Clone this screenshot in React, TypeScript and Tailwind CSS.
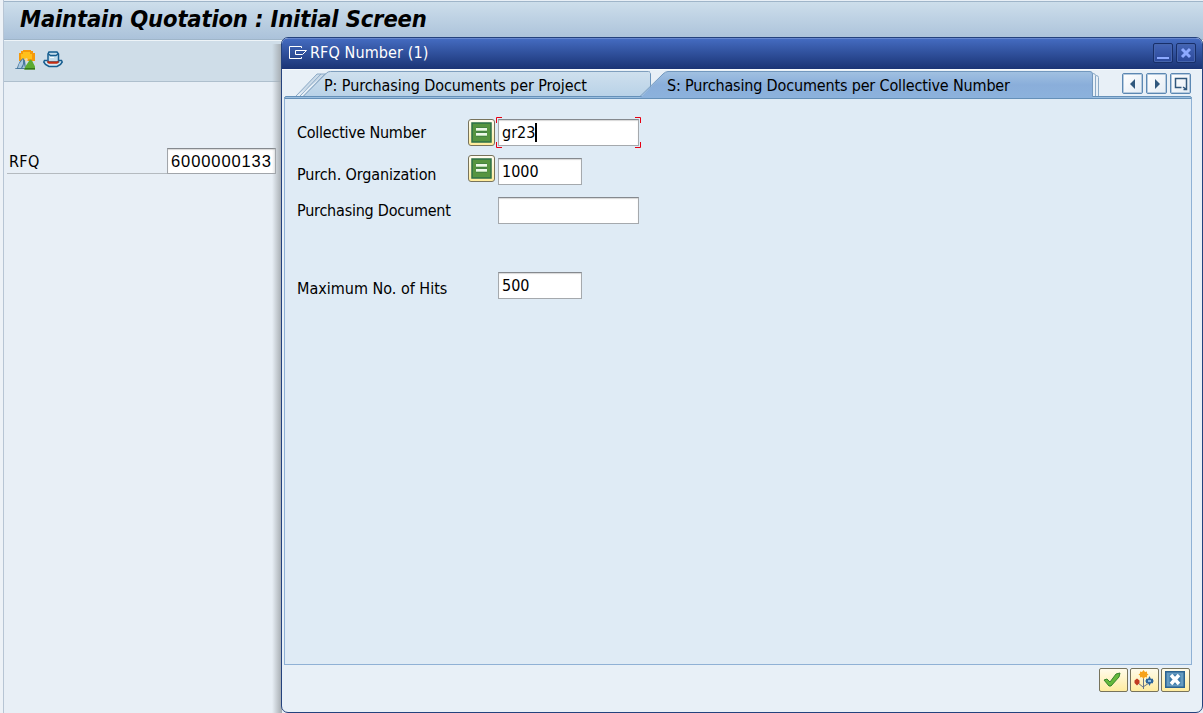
import React from "react";

const face = "font-['DejaVu_Sans_Condensed','DejaVu_Sans',sans-serif] [font-stretch:condensed]";

function MountainIcon() {
  return (
    <svg width="21" height="21" viewBox="0 0 21 21">
      <path d="M4 12V4h2V2h2V1h8v1h2v2h2v8z" fill="#f59a0c" />
      <path d="M6 10V5h2V3h7v2h2v5H6z" fill="#ffc01c" />
      <path d="M0 20.500v-1L2 19l1-3 2-4 3-3 2 2 1 9H0z" fill="#48799e" />
      <path d="M3 19l1-4 4-5v5l-2 4H3zM8 18l1-3 1 4H7z" fill="#abc8df" />
      <path d="M9 20.500l2-4 4-6 2 1 3 6v3H9z" fill="#5cab32" />
      <path d="M10 19h10v1.500H9.500z" fill="#347719" />
      <path d="M9 10l3-1 1 2-2 2z" fill="#eed9a4" />
    </svg>
  );
}

function HatIcon() {
  return (
    <svg width="20" height="17" viewBox="0 0 20 17">
      <path d="M4.500 9.500H1.500L.8 11l1.700 2.500L6 15.500h8l3.500-2 1.700-2.500-.7-1.500h-3" fill="#d5e8f4" stroke="#145c8e" strokeWidth="1.500" />
      <path d="M5 11V3l1-2h8l1.500 2v8z" fill="#c3dceb" stroke="#145c8e" strokeWidth="1.500" />
      <path d="M5.500 3l2 1.500h5.500l2-1.500" fill="none" stroke="#145c8e" strokeWidth="1.500" />
      <path d="M4.500 9.500l1.500 1h8l1.500-1V12L14 12.800H6L4.500 12z" fill="#c62d12" />
      <path d="M7 6.500h4" stroke="#f1f8fc" />
    </svg>
  );
}

function EqualButton() {
  return (
    <button className="flex h-[27px] w-[27px] items-center justify-center rounded-[3px] border border-[#77735c] bg-linear-to-b from-[#fffdf0] to-[#ffeb99]">
      <svg className="mb-px mr-px" width="21" height="21" viewBox="0 0 21 21">
        <rect x="1" y="1" width="19" height="19" fill="#579540" stroke="#2d7047" strokeWidth="1.500" />
        <path d="M5 5h11v10H5z" fill="#468441" />
        <path d="M5 7.500h11M5 12.500h11" stroke="#edf8e9" strokeWidth="3" />
        <path d="M5 8.500h11M5 13.500h11" stroke="#b9d9ac" />
      </svg>
    </button>
  );
}

function NavButton({ children }: { children: React.ReactNode }) {
  return (
    <button className="flex h-[21px] w-[21px] items-center justify-center rounded-[2px] border border-[#5c88b3] bg-linear-to-br from-white to-[#e4ecf5] shadow-[inset_0_0_0_1px_#b5cade]">
      <svg width="18" height="18" viewBox="0 0 18 18">{children}</svg>
    </button>
  );
}

function Field({ value, size, focused = false }: { value: string; size: string; focused?: boolean }) {
  return (
    <div className={`relative flex h-[27px] items-center border border-[#a5a9ad] border-t-[#85898e] bg-white pl-[3px] text-[16px] shadow-[inset_0_1px_1px_#d8d8d8] ${size}`}>
      <span>{value}</span>
      {focused && <span className="h-[19px] w-[2px] bg-black" />}
      {focused && (
        <svg className="absolute -left-[3px] -top-[3px]" width="145" height="31" viewBox="0 0 145 31" fill="none" stroke="#e50012">
          <path d="M.5 6V.5H6M139 .5h5.500V6M.5 25v5.500H6M139 30.500h5.500V25" />
        </svg>
      )}
    </div>
  );
}

function TitleButton({ children }: { children: React.ReactNode }) {
  return (
    <button className="h-5 w-5 rounded-[2px] border border-[#182f69] bg-linear-to-b from-[#4465b5] to-[#2b489a] shadow-[inset_0_0_0_1px_#4665ad]">
      <svg width="18" height="18" viewBox="0 0 18 18">{children}</svg>
    </button>
  );
}

function ActionButton({ children }: { children: React.ReactNode }) {
  return (
    <button className="flex h-6 w-[29px] items-center justify-center rounded-[2px] border border-[#77735c] bg-linear-to-b from-[#fffbea] to-[#ffec9e]">
      {children}
    </button>
  );
}

function Tabs() {
  return (
    <div className="relative flex h-[30px] w-full shrink-0">
      <svg className="absolute left-0 top-0" width="920" height="31" viewBox="282 69 920 31">
        <defs>
          <linearGradient id="pTab" x1="0" y1="0" x2="0" y2="1">
            <stop offset="0" stopColor="#cfe0ee" />
            <stop offset="1" stopColor="#b9d2e7" />
          </linearGradient>
          <linearGradient id="sTab" x1="0" y1="0" x2="0" y2="1">
            <stop offset="0" stopColor="#a1c1e1" />
            <stop offset=".5" stopColor="#8aaeda" />
            <stop offset="1" stopColor="#8cb2dc" />
          </linearGradient>
        </defs>
        <path d="M282 69.500h920" stroke="#f8fbfd" />
        <path d="M284.500 98.500q0-2 1.500-2h904q1.500 0 1.500 2z" fill="#9bbfe0" stroke="#6590b8" />
        <path d="M296 96l21-22h10M300 96l21-22M304 96l21-22" fill="#cbdbe9" stroke="#8caac6" />
        <path d="M303.500 96l23-23q1.500-1.500 4-1.500h318q2 0 2 2V96" fill="url(#pTab)" stroke="#7f9fbe" />
        <path d="M1093 73.500q2.500 0 2.500 2V96M1096 75.500q2.500 0 2.500 2V96" fill="none" stroke="#8caac6" />
        <path d="M651 84v-9q0-3-2-3h16z" fill="#e8eff6" />
        <path d="M650.500 85V73.500" stroke="#6d95bc" />
        <path d="M640 98l23-24q2.500-2.500 5-2.500h422q2.500 0 2.500 2.500v24z" fill="url(#sTab)" />
        <path d="M640 96.500l23-22.500q2.500-2.500 5-2.500h422q2.500 0 2.500 2.500v22.500" fill="none" stroke="#7298be" />
      </svg>
      <div className="relative flex h-[27px] w-full items-center pt-[5px] text-[16px]">
        <span className="ml-[42px] w-[343px] whitespace-nowrap pt-px tracking-[-0.08px]">P: Purchasing Documents per Project</span>
        <span className="whitespace-nowrap pt-px tracking-[-0.16px]">S: Purchasing Documents per Collective Number</span>
        <div className="mb-[3px] ml-auto mr-[11px] flex gap-[3px]">
          <NavButton><path d="M11 4v10L6 9z" fill="#31587d" /></NavButton>
          <NavButton><path d="M7 4v10l5-5z" fill="#31587d" /></NavButton>
          <NavButton><path d="M9.500 12.500h-6v-9h11v9M14.500 10v4.500h-3M11 12l3 2" fill="none" stroke="#31587d" strokeWidth="1.500" /></NavButton>
        </div>
      </div>
    </div>
  );
}

function FormRow({ label, className, labelClass = "", children }: { label: string; className: string; labelClass?: string; children: React.ReactNode }) {
  return (
    <div className={`flex h-[27px] items-center ${className}`}>
      <span className={`w-[171px] whitespace-nowrap text-[16px] ${labelClass}`}>{label}</span>
      {children}
    </div>
  );
}

function Dialog() {
  return (
    <section className="absolute left-[281px] top-[37px] flex h-[676px] w-[922px] flex-col overflow-hidden rounded-[7px] border border-[#24427d] bg-[#e8f0f7]">
      <header className="flex h-[31px] shrink-0 items-center border-t border-[#6787cf] bg-linear-to-b from-[#446bc0] to-[#1b3475] pb-[3px] pl-[7px] pr-[6px] text-[16px] text-white">
        <svg width="19" height="13" viewBox="0 0 19 13" fill="none" stroke="white">
          <path d="M12.500 2V.5H.5v12h12V11M17.500 4.500h-11v4h7l4-4" />
        </svg>
        <span className="ml-[2px] tracking-[0.1px]">RFQ Number (1)</span>
        <div className="ml-auto flex gap-[3px]">
          <TitleButton><path d="M3 14h12" stroke="#8daaff" strokeWidth="2" /></TitleButton>
          <TitleButton><path d="M5 5l8 8M13 5l-8 8" stroke="#8daaff" strokeWidth="3" /></TitleButton>
        </div>
      </header>
      <Tabs />
      <div className="ml-[2px] h-[566px] w-[908px] shrink-0 border border-t-0 border-[#8fb1d5] bg-[#dfebf5] pl-3 pt-[20px]">
        <FormRow label="Collective Number" className="" labelClass="tracking-[-0.25px]">
          <EqualButton />
          <div className="ml-[3px]"><Field value="gr23" size="w-[141px]" focused /></div>
        </FormRow>
        <FormRow label="Purch. Organization" className="mt-[12px]" labelClass="pt-[6px] tracking-[-0.1px]">
          <div className="mb-[6px]"><EqualButton /></div>
          <div className="ml-[3px]"><Field value="1000" size="w-[84px]" /></div>
        </FormRow>
        <FormRow label="Purchasing Document" className="mt-[12px]" labelClass="tracking-[-0.22px]">
          <div className="ml-[30px]"><Field value="" size="w-[141px]" /></div>
        </FormRow>
        <FormRow label="Maximum No. of Hits" className="mt-[48px]" labelClass="pt-[6px]">
          <div className="ml-[30px]"><Field value="500" size="w-[84px]" /></div>
        </FormRow>
      </div>
      <footer className="flex justify-end gap-[2px] pr-[12px] pt-[3px]">
        <ActionButton>
          <svg className="mr-[3px]" width="18" height="16" viewBox="0 0 18 16"><path d="M1 8l3-1 3 3 6-8 4-1-1 4-8 9H6z" fill="#66b93c" stroke="#35832d" /></svg>
        </ActionButton>
        <ActionButton>
          <svg className="mr-px" width="20" height="20" viewBox="0 0 20 20">
            <path d="M9.500 7v12M4 13l5 4 6-4" fill="none" stroke="#66768a" />
            <path d="M9.500 0l1.500 2 2-.5v2l1.500 1-1.500 1v2l-2-.5-1.500 2-1.500-2-2 .5v-2l-1.500-1 1.500-1v-2l2 .5z" fill="#f7a21a" />
            <path d="M3 8.500l2.500 2V13L3 15.500.500 13v-2.500z" fill="#c13a20" />
            <path d="M15.500 6l1.300 2.700H19v1.600l1 .7-1 .7v1.600h-2.200L15.500 16l-1.300-2.700H12v-1.600l-1-.7 1-.7V8.700h2.200z" fill="#2e669c" />
            <path d="M14 11h3" stroke="#8ebce0" strokeWidth="2" />
          </svg>
        </ActionButton>
        <ActionButton>
          <svg className="mb-[2px] mr-px" width="20" height="17" viewBox="0 0 20 17">
            <rect x=".75" y=".75" width="18.500" height="15.500" fill="#659bc1" stroke="#2b6391" strokeWidth="1.500" />
            <path d="M4.500 3.500h11v10h-11z" fill="#3d7ba8" />
            <path d="M6 4l8 9M14 4l-8 9" stroke="white" strokeWidth="3.500" />
          </svg>
        </ActionButton>
      </footer>
    </section>
  );
}

export default function App() {
  return (
    <main className={`relative h-[713px] w-[1203px] overflow-hidden bg-[#edf2f7] pl-[3px] text-black ${face}`}>
      <div className="flex h-full flex-col border-l border-[#b7c5d4] bg-[#e8eff6]">
        <header className="mt-px flex h-[39px] items-center border-y border-[#9fb5c9] bg-linear-to-b from-[#cddeeb] to-[#abc2da] pb-px pl-[16px]">
          <h1 className="whitespace-nowrap text-[23.5px] font-bold italic leading-none tracking-[-0.15px]">Maintain Quotation : Initial Screen</h1>
        </header>
        <div className="flex h-[42px] items-center gap-[7px] border-b border-t border-b-[#aebfcd] border-t-[#eef4f8] bg-[#cfdde8] pb-[3px] pl-[11px]">
          <MountainIcon />
          <HatIcon />
        </div>
        <div className="ml-[3px] mt-[66px] flex h-[26px] w-[269px] items-center border-b border-[#b4babf] pl-[2px]">
          <span className="pt-[2px] text-[16px] tracking-[0.3px]">RFQ</span>
          <div className="ml-auto mt-px flex h-[26px] w-[109px] items-center border border-[#a1a5aa] border-t-[#85898e] bg-white pl-[3px] font-['Liberation_Sans',sans-serif] text-[16.5px] tracking-[0.9px] shadow-[inset_0_1px_1px_#d8d8d8]">6000000133</div>
        </div>
      </div>
      <div className="absolute bottom-0 left-[272px] top-[44px] w-[10px] bg-linear-to-r from-transparent to-[#a3a9ae]" />
      <Dialog />
    </main>
  );
}
